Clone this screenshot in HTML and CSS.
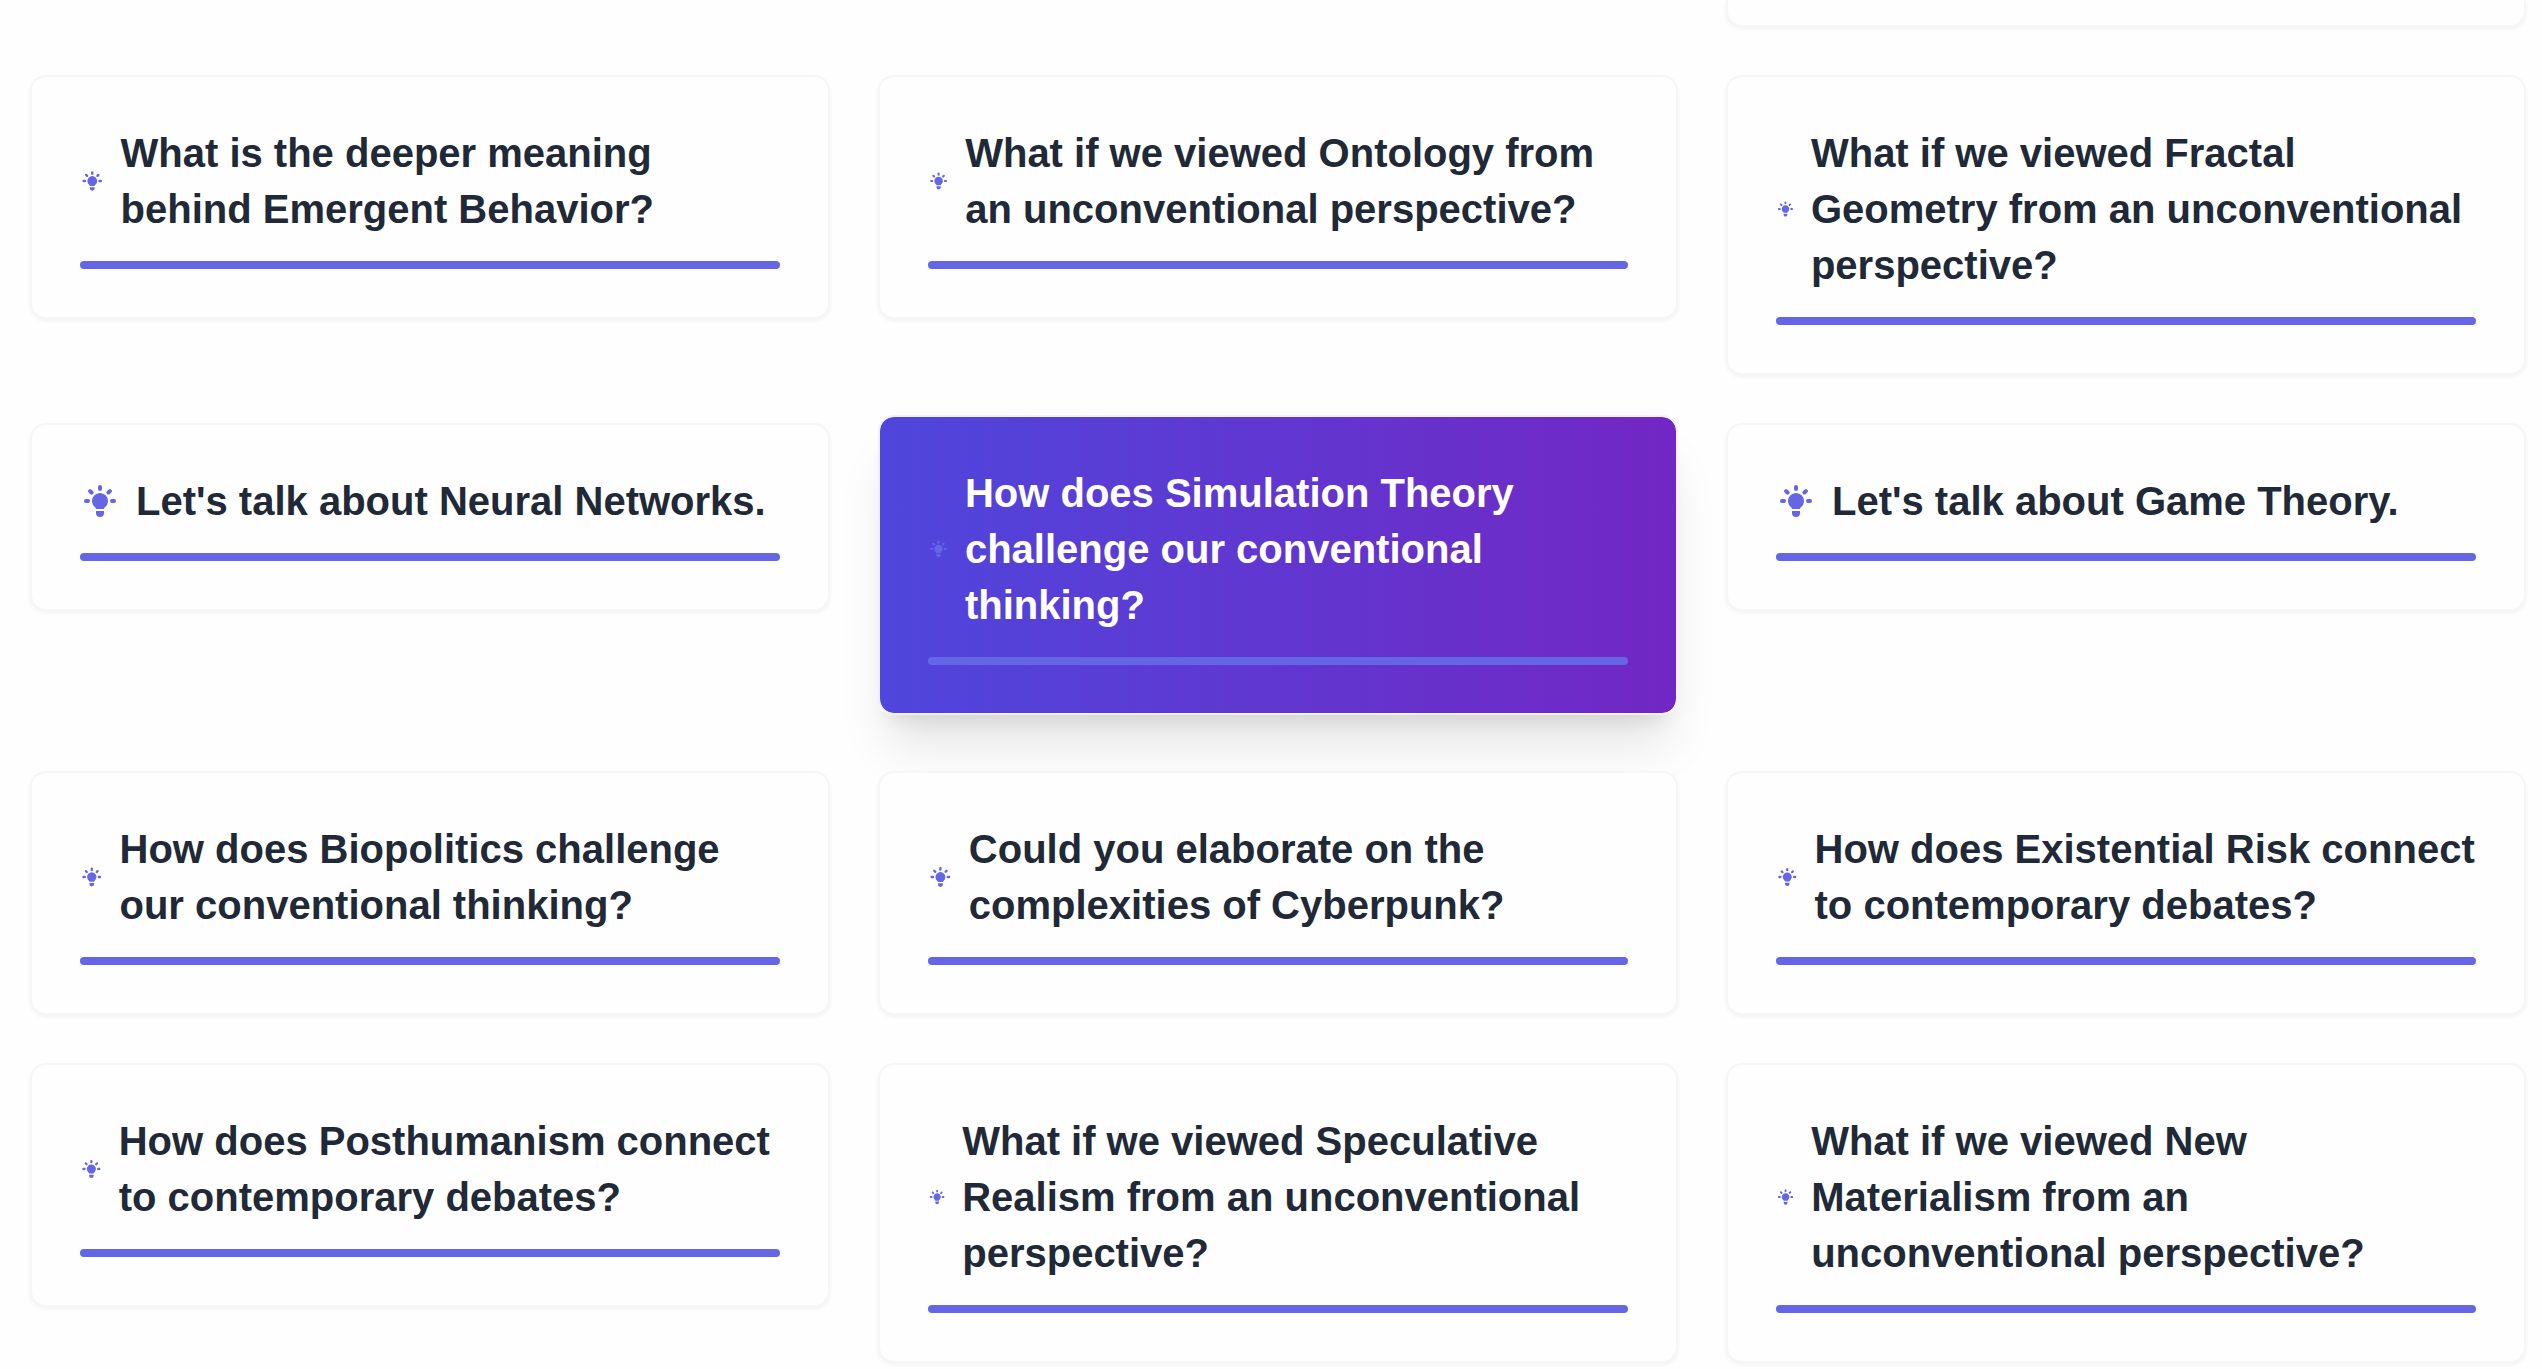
FILE: index.html
```html
<!DOCTYPE html>
<html lang="en">
<head>
<meta charset="utf-8">
<title>Conversation prompts</title>
<link rel="stylesheet" href="styles.css">
</head>
<body>
<svg class="sprite" aria-hidden="true">
  <symbol id="bulb" viewBox="0 0 20 20">
    <path d="M11 3a1 1 0 1 0-2 0v1a1 1 0 1 0 2 0V3zM15.657 5.757a1 1 0 0 0-1.414-1.414l-.707.707a1 1 0 0 0 1.414 1.414l.707-.707zM18 10a1 1 0 0 1-1 1h-1a1 1 0 1 1 0-2h1a1 1 0 0 1 1 1zM5.050 6.464A1 1 0 1 0 6.464 5.050l-.707-.707a1 1 0 0 0-1.414 1.414l.707.707zM5 10a1 1 0 0 1-1 1H3a1 1 0 1 1 0-2h1a1 1 0 0 1 1 1zM8 16v-1h4v1a2 2 0 1 1-4 0zM12 14c.015-.34.208-.646.477-.859a4 4 0 1 0-4.954 0c.27.213.462.519.476.859h4.002z"/>
  </symbol>
</svg>
<main class="grid">
  <article class="card card--tail"></article>
  <article class="card"><div class="head"><svg class="icon"><use href="#bulb"/></svg><h2>What is the deeper meaning behind Emergent Behavior?</h2></div><div class="bar"></div></article>
  <article class="card"><div class="head"><svg class="icon"><use href="#bulb"/></svg><h2>What if we viewed Ontology from an unconventional perspective?</h2></div><div class="bar"></div></article>
  <article class="card"><div class="head"><svg class="icon"><use href="#bulb"/></svg><h2>What if we viewed Fractal Geometry from an unconventional perspective?</h2></div><div class="bar"></div></article>
  <article class="card"><div class="head"><svg class="icon"><use href="#bulb"/></svg><h2>Let's talk about Neural Networks.</h2></div><div class="bar"></div></article>
  <article class="card card--active"><div class="head"><svg class="icon"><use href="#bulb"/></svg><h2>How does Simulation Theory challenge our conventional thinking?</h2></div><div class="bar"></div></article>
  <article class="card"><div class="head"><svg class="icon"><use href="#bulb"/></svg><h2>Let's talk about Game Theory.</h2></div><div class="bar"></div></article>
  <article class="card"><div class="head"><svg class="icon"><use href="#bulb"/></svg><h2>How does Biopolitics challenge our conventional thinking?</h2></div><div class="bar"></div></article>
  <article class="card"><div class="head"><svg class="icon"><use href="#bulb"/></svg><h2>Could you elaborate on the complexities of Cyberpunk?</h2></div><div class="bar"></div></article>
  <article class="card"><div class="head"><svg class="icon"><use href="#bulb"/></svg><h2>How does Existential Risk connect to contemporary debates?</h2></div><div class="bar"></div></article>
  <article class="card"><div class="head"><svg class="icon"><use href="#bulb"/></svg><h2>How does Posthumanism connect to contemporary debates?</h2></div><div class="bar"></div></article>
  <article class="card"><div class="head"><svg class="icon"><use href="#bulb"/></svg><h2>What if we viewed Speculative Realism from an unconventional perspective?</h2></div><div class="bar"></div></article>
  <article class="card"><div class="head"><svg class="icon"><use href="#bulb"/></svg><h2>What if we viewed New Materialism from an unconventional perspective?</h2></div><div class="bar"></div></article>
</main>
</body>
</html>
```
FILE: styles.css
```css
* { box-sizing: border-box; }

body {
  margin: 0;
  background: #fefefe;
  color: #1f2937;
  font-family: "Liberation Sans", Arial, sans-serif;
}

.sprite { display: none; }

.grid {
  display: grid;
  grid-template-columns: repeat(3, minmax(0, 1fr));
  align-items: start;
  gap: 48px;
  padding: 0 16px 4px 30px;
}

.card {
  padding: 48px;
  border: 2px solid #f5f6f8;
  border-radius: 16px;
  background: #fefefe;
  box-shadow: 0 2px 4px rgba(0, 0, 0, 0.05);
  transform: translateY(0);
}

/* last visible strip of the row above */
.card--tail {
  grid-column: 3;
  height: 27px;
  padding: 0;
  border-top: 0;
  border-radius: 0 0 16px 16px;
}

.card--active {
  transform: translateY(-8px);
  border-color: #f3f1fb;
  background: linear-gradient(to right, #4f46dc, #7227c4) padding-box;
  color: #fff;
  box-shadow: 0 40px 50px -10px rgba(0, 0, 0, 0.1), 0 16px 20px -12px rgba(0, 0, 0, 0.1);
}

.head {
  display: flex;
  align-items: center;
  margin-bottom: 24px;
}

.icon {
  width: 40px;
  height: 40px;
  margin-right: 16px;
  color: #6466e6;
  fill: currentColor;
}

h2 {
  margin: 0;
  font-size: 40px;
  font-weight: 700;
  line-height: 56px;
}

.bar {
  height: 8px;
  border-radius: 4px;
  background: #6466e6;
}
```
